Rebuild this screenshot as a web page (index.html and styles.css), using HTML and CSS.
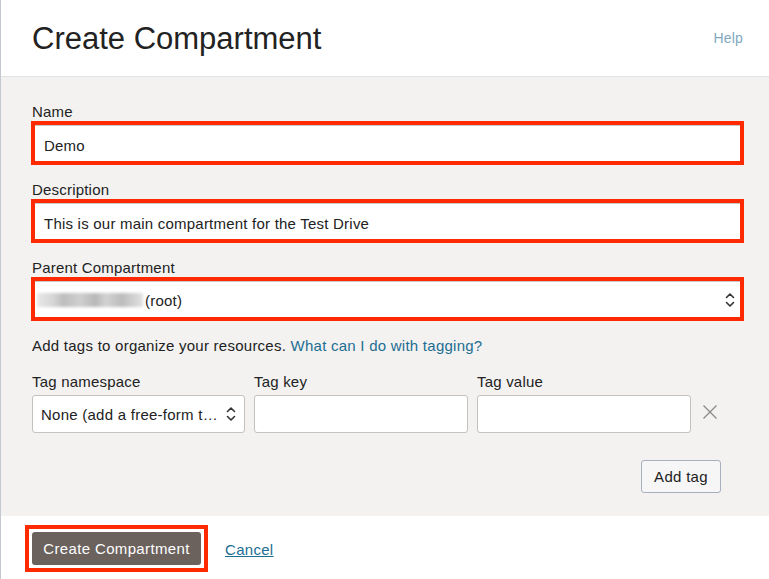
FILE: index.html
```html
<!DOCTYPE html>
<html>
<head>
<meta charset="utf-8">
<link rel="stylesheet" href="styles.css">
</head>
<body>
<div class="page">
  <header class="head">
    <h1 class="title">Create Compartment</h1>
    <a class="help">Help</a>
  </header>
  <main class="body">
    <div class="field first">
      <div class="label">Name</div>
      <div class="hl"><div class="input">Demo</div></div>
    </div>
    <div class="field">
      <div class="label">Description</div>
      <div class="hl"><div class="input">This is our main compartment for the Test Drive</div></div>
    </div>
    <div class="field">
      <div class="label">Parent Compartment</div>
      <div class="hl"><div class="input sel"><span class="blur"></span><span class="root">(root)</span>
        <svg class="chev" width="10" height="16" viewBox="0 0 10 16"><path d="M1.5 5.5 L5 2 L8.5 5.5 M1.5 10.5 L5 14 L8.5 10.5" fill="none" stroke="#333" stroke-width="1.6" stroke-linecap="round" stroke-linejoin="round"/></svg>
      </div></div>
    </div>
    <p class="hint">Add tags to organize your resources. <a class="link">What can I do with tagging?</a></p>
    <div class="tags">
      <div class="tcol">
        <div class="label">Tag namespace</div>
        <div class="box select"><span class="seltext">None (add a free-form t…</span>
          <svg class="chev2" width="10" height="16" viewBox="0 0 10 16"><path d="M1.5 5.5 L5 2 L8.5 5.5 M1.5 10.5 L5 14 L8.5 10.5" fill="none" stroke="#333" stroke-width="1.6" stroke-linecap="round" stroke-linejoin="round"/></svg>
        </div>
      </div>
      <div class="tcol">
        <div class="label">Tag key</div>
        <div class="box"></div>
      </div>
      <div class="tcol">
        <div class="label">Tag value</div>
        <div class="box"></div>
      </div>
      <svg class="close" width="16" height="16" viewBox="0 0 16 16"><path d="M1.5 1.5 L14.5 14.5 M14.5 1.5 L1.5 14.5" stroke="#8a8a8a" stroke-width="1.3"/></svg>
    </div>
    <div class="addrow"><button class="addtag">Add tag</button></div>
  </main>
  <footer class="foot">
    <div class="btnhl"><button class="primary">Create Compartment</button></div>
    <a class="cancel">Cancel</a>
  </footer>
</div>
</body>
</html>
```
FILE: styles.css
```css
* { box-sizing: border-box; }
html, body { margin: 0; padding: 0; background: #fff; }
body { font-family: "Liberation Sans", Arial, sans-serif; color: #222; }
.page { width: 769px; height: 579px; border-left: 1px solid #c3c8d1; display: flex; flex-direction: column; }
.head { height: 77px; border-bottom: 1px solid #e2e2e2; display: flex; align-items: center; justify-content: space-between; padding: 0 26px 0 31px; }
.title { margin: 0; font-weight: normal; font-size: 31px; color: #222; letter-spacing: 0; padding-top: 1px; }
.help { font-size: 14px; color: #7fa8c0; letter-spacing: 0.2px; }
.body { background: #f3f2f1; height: 439px; padding: 26px 25px 0 31px; }
.field { margin-top: 16px; }
.field.first { margin-top: 0; }
.label { font-size: 15px; line-height: 18px; letter-spacing: 0.2px; color: #222; }
.hl { margin-left: -1px; border: 4px solid #ff2a00; background: #fff; height: 44px; }
.input { height: 36px; border-top: 1px solid #c9c9c9; background: #fff; font-size: 15px; letter-spacing: 0.22px; padding: 3px 0 0 9px; color: #222; display: flex; align-items: center; }
.sel { padding-left: 2px; padding-top: 1px; }
.blur { display: inline-block; width: 106px; height: 14px; background: linear-gradient(90deg, #e8e8e8 0%, #d6d6d6 15%, #bdbdbd 25%, #cfcfcf 40%, #b8b8b8 55%, #d2d2d2 65%, #bcbcbc 80%, #e2e2e2 100%); filter: blur(1.5px); margin-right: 2px; }
.root { flex: 1; }
.chev { margin-right: 5px; }
.hint { margin: 16px 0 0; font-size: 15px; line-height: 18px; letter-spacing: 0.25px; }
.link { color: #1d6e92; }
.tags { margin-top: 18px; display: flex; align-items: flex-end; gap: 9px; }
.tcol { width: 214px; }
.tcol:first-child { width: 213px; }
.tcol .label { margin-bottom: 4px; }
.box { height: 38px; background: #fff; border: 1px solid #c5c1bd; border-radius: 3px; }
.select { display: flex; align-items: center; padding: 0 8px 0 8px; }
.seltext { flex: 1; font-size: 15px; letter-spacing: 0.25px; color: #222; white-space: nowrap; }
.close { margin: 0 0 13px 2px; }
.addrow { display: flex; justify-content: flex-end; width: 689px; margin-top: 27px; }
.addtag { font-family: "Liberation Sans", Arial, sans-serif; font-size: 15px; letter-spacing: 0.3px; color: #222; background: #f6f6f6; border: 1px solid #a7b0bf; border-radius: 3px; height: 33px; width: 80px; padding: 0; }
.foot { flex: 1; display: flex; align-items: center; padding: 2px 0 0 24px; gap: 17px; }
.btnhl { border: 4px solid #ff2a00; padding: 3px; background: #fff; }
.primary { display: block; font-family: "Liberation Sans", Arial, sans-serif; font-size: 15px; letter-spacing: 0.35px; color: #fff; background: #6b625e; border: none; border-radius: 3px; height: 33px; width: 169px; padding: 0; }
.cancel { font-size: 15px; letter-spacing: 0.3px; color: #1d6e92; text-decoration: underline; margin-top: 1px; }
```
